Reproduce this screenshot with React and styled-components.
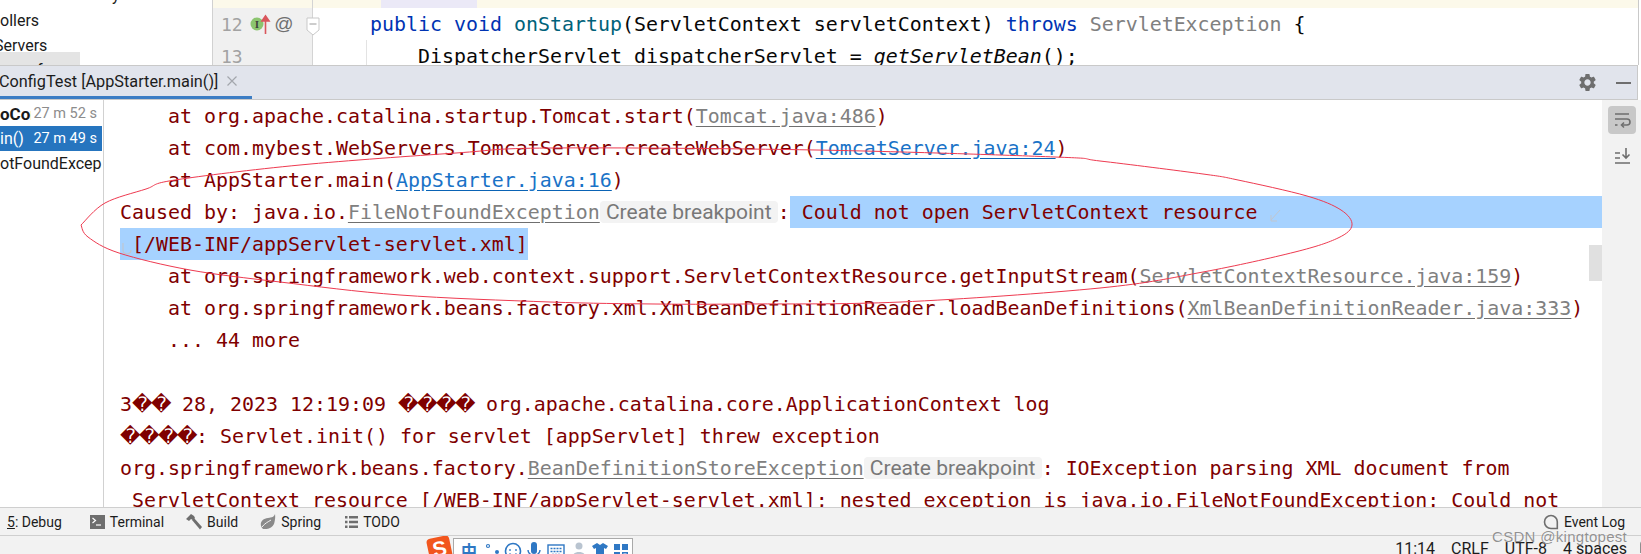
import React from 'react';
import styled, { createGlobalStyle } from 'styled-components';
import { MdSettings } from 'react-icons/md';

const GlobalStyle = createGlobalStyle`
  html, body {
    margin: 0;
    padding: 0;
    background: #fff;
  }
`;

const ui = `Roboto, 'Open Sans', sans-serif`;
const mono = `'DejaVu Sans Mono', 'Liberation Mono', monospace`;

const Page = styled.div`
  position: relative;
  width: 1641px;
  height: 554px;
  overflow: hidden;
  display: flex;
  flex-direction: column;
  font-family: ${ui};
  background: #fff;
`;

const TopRow = styled.div`
  display: flex;
  height: 65px;
  width: 1638px;
  flex: none;
  overflow: hidden;
  border-right: 1px solid #c9c9c9;
`;

const Tree = styled.div`
  width: 213px;
  flex: none;
  box-sizing: border-box;
  border-right: 1px solid #d1d1d1;
  overflow: hidden;
  font-size: 16px;
  color: #1a1a1a;
`;

const TreeRow = styled.div`
  height: 25px;
  line-height: 25px;
  white-space: nowrap;
  margin-top: ${p => p.$top || 0}px;
  margin-left: ${p => p.$left || 0}px;
`;

const TreeSelected = styled.div`
  width: 80px;
  height: 25px;
  margin-top: -6px;
  padding-left: 37px;
  box-sizing: border-box;
  line-height: 38px;
  background: #e4e4e4;
`;

const Editor = styled.div`
  flex: 1;
  display: flex;
  flex-direction: column;
  min-width: 0;
`;

const Band = styled.div`
  height: 8px;
  flex: none;
  display: flex;
  background: #fcf9ea;
`;

const BandGutter = styled.div`
  width: 100px;
  border-right: 1px solid #d4d4d4;
  box-sizing: border-box;
`;

const BandSelection = styled.div`
  width: 96px;
  margin-left: 68px;
  background: #ebe9f7;
`;

const EditorRow = styled.div`
  display: flex;
  height: 32px;
  flex: none;
`;

const Gutter = styled.div`
  width: 100px;
  flex: none;
  box-sizing: border-box;
  display: flex;
  align-items: center;
  padding-left: 8px;
  background: #f0f0f0;
  border-right: 1px solid #d4d4d4;
  font-family: ${mono};
  font-size: 18px;
  color: #a2a2a2;
`;

const GutterMarks = styled.svg`
  margin-left: 2px;
  flex: none;
  overflow: visible;
`;

const CodeLine = styled.div`
  flex: 1;
  padding-left: ${p => p.$indent * 12 + 9}px;
  font-family: ${mono};
  font-size: 19.93px;
  line-height: 33px;
  white-space: pre;
  color: #080808;
  background: ${p => (p.$guide ? 'linear-gradient(#e3e3e3, #e3e3e3) 53px 0 / 1px 100% no-repeat' : 'none')};
`;

const Keyword = styled.span`
  color: #0033b3;
`;

const Method = styled.span`
  color: #00627a;
`;

const Muted = styled.span`
  color: #808080;
`;

const Italic = styled.span`
  font-style: italic;
`;

const ToolHeader = styled.div`
  position: relative;
  width: 1638px;
  height: 35px;
  flex: none;
  box-sizing: border-box;
  display: flex;
  align-items: center;
  border-top: 1px solid #c9c9c9;
  border-bottom: 1px solid #c9c9c9;
  border-right: 1px solid #c9c9c9;
  background: #e1e4ec;
  overflow: hidden;
`;

const Tab = styled.div`
  width: 253px;
  height: 100%;
  flex: none;
  box-sizing: border-box;
  display: flex;
  align-items: center;
  gap: 9px;
  margin-left: -1px;
  border-bottom: 3px solid #3c7dc4;
  font-size: 16.25px;
  color: #1c1c1c;
  white-space: nowrap;
`;

const HeaderTools = styled.div`
  margin-left: auto;
  display: flex;
  align-items: center;
  gap: 18px;
  padding-right: 6px;
`;

const Minimize = styled.div`
  width: 15px;
  height: 2px;
  background: #6e6e6e;
`;

const Body = styled.div`
  height: 407px;
  flex: none;
  display: flex;
  overflow: hidden;
`;

const Frames = styled.div`
  width: 104px;
  flex: none;
  box-sizing: border-box;
  border-right: 1px solid #d1d1d1;
  padding-top: 1px;
  font-size: 16px;
  overflow: hidden;
`;

const FrameRow = styled.div`
  height: 25px;
  display: flex;
  align-items: center;
  justify-content: space-between;
  width: 102px;
  box-sizing: border-box;
  padding-right: 5px;
  white-space: nowrap;
  overflow: hidden;
  color: ${p => (p.$active ? '#fff' : '#1a1a1a')};
  background: ${p => (p.$active ? '#2675bf' : 'transparent')};
`;

const FrameName = styled.span`
  width: 31px;
  overflow: hidden;
  font-weight: ${p => (p.$bold ? 700 : 400)};
  font-size: ${p => (p.$bold ? 17 : 16)}px;
`;

const FrameTime = styled.span`
  color: ${p => (p.$active ? '#fff' : '#8c8c8c')};
  font-size: 14.5px;
`;

const Console = styled.div`
  position: relative;
  flex: 1;
  min-width: 0;
  overflow: hidden;
  font-family: ${mono};
  font-size: 19.93px;
  color: #7f0000;
`;

const Line = styled.div`
  display: flex;
  align-items: center;
  height: 32px;
  line-height: 33px;
  white-space: pre;
  padding-left: ${p => 16 + (p.$indent ? 48 : 0)}px;
`;

const LibLink = styled.span`
  color: #808080;
  text-decoration: underline;
  text-underline-offset: 3px;
  text-decoration-color: #6f6f6f;
`;

const UserLink = styled.span`
  color: #1a73c7;
  text-decoration: underline;
  text-underline-offset: 3px;
  text-decoration-color: #0a63b5;
`;

const Hint = styled.span`
  width: 178px;
  height: 22px;
  box-sizing: border-box;
  display: inline-flex;
  align-items: center;
  justify-content: center;
  border-radius: 4px;
  background: #f3f3f3;
  color: #787878;
  font-family: ${ui};
  font-size: 21px;
`;

const BadChar = styled.span`
  display: inline-block;
  width: 19px;
  text-align: center;
  font-family: 'DejaVu Sans', sans-serif;
  font-size: 20px;
  line-height: 32px;
`;

const BadRun = styled.span`
  display: inline-flex;
`;

const Selected = styled.span`
  position: relative;
  align-self: stretch;
  background: #a6d2ff;
  flex: ${p => (p.$fill ? 1 : 'none')};
`;

const MarkBox = styled.span`
  position: absolute;
  left: ${p => p.$left}px;
  top: ${p => p.$top}px;
  display: flex;
`;

const RightBar = styled.div`
  width: 39px;
  flex: none;
  display: flex;
  flex-direction: column;
  align-items: center;
  gap: 8px;
  padding-top: 6px;
  box-sizing: border-box;
  background: #f2f2f2;
`;

const BarButton = styled.div`
  width: 28px;
  height: 28px;
  display: flex;
  align-items: center;
  justify-content: center;
  border-radius: 4px;
  background: ${p => (p.$on ? '#c8c8c8' : 'transparent')};
`;

const ScrollThumb = styled.div`
  position: absolute;
  right: 0;
  top: 145px;
  width: 13px;
  height: 36px;
  background: #e0e0e0;
`;

const Stripes = styled.div`
  height: 29px;
  flex: none;
  box-sizing: border-box;
  display: flex;
  align-items: center;
  padding-right: 16px;
  background: #f2f2f2;
  border-top: 1px solid #cfcfcf;
  border-bottom: 1px solid #cfcfcf;
  font-size: 14px;
  color: #1c1c1c;
`;

const Stripe = styled.div`
  display: flex;
  align-items: center;
  gap: 5px;
  margin-left: ${p => (p.$auto ? 'auto' : `${p.$left}px`)};
  white-space: nowrap;
`;

const Mnemonic = styled.span`
  text-decoration: underline;
`;

const StatusBar = styled.div`
  height: 19px;
  flex: none;
  display: flex;
  align-items: flex-start;
  background: #f2f2f2;
  font-size: 16px;
  color: #1c1c1c;
  overflow: hidden;
`;

const Ime = styled.div`
  display: flex;
  align-items: flex-start;
  margin-left: 428px;
`;

const ImeLogo = styled.div`
  width: 23px;
  height: 23px;
  margin-top: 1px;
  border-radius: 4px;
  display: flex;
  align-items: center;
  justify-content: center;
  background: #f2561d;
  color: #fff;
  font-family: 'Liberation Sans', sans-serif;
  font-weight: 700;
  font-size: 21px;
  transform: rotate(-12deg);
`;

const ImeBar = styled.div`
  width: 180px;
  height: 24px;
  margin-top: 2px;
  margin-left: 2px;
  box-sizing: border-box;
  display: flex;
  align-items: flex-start;
  padding-top: 1px;
  border: 1px solid #a9a9a9;
  border-bottom: none;
  background: #fff;
`;

const ImeChar = styled.span`
  width: 30px;
  padding-left: 7px;
  box-sizing: border-box;
  font-family: 'Noto Sans CJK SC', sans-serif;
  font-size: 16px;
  font-weight: 700;
  line-height: 20px;
  color: #2f78c4;
`;

const StatusItems = styled.div`
  margin-left: auto;
  margin-right: -9px;
  display: flex;
  gap: 16px;
  padding-top: 3px;
  line-height: 20px;
  white-space: nowrap;
`;

const LockIcon = styled.svg`
  margin-left: -3px;
`;

const Watermark = styled.div`
  position: absolute;
  left: 1492px;
  top: 528px;
  font-family: 'Liberation Sans', sans-serif;
  font-size: 15px;
  letter-spacing: 0.3px;
  color: rgba(110, 110, 110, 0.75);
  text-shadow: 0 0 1px rgba(255, 255, 255, 0.9);
  white-space: nowrap;
`;

const Overlay = styled.svg`
  position: absolute;
  left: 0;
  top: 0;
  pointer-events: none;
`;

// the hand drawn ellipse, run through a catmull-rom curve
const inkPoints = [
  [81, 225], [88, 237], [119, 253], [190, 270], [280, 282], [400, 295], [550, 302], [655, 304],
  [743, 304], [901, 302], [1100, 288], [1203, 272], [1295, 252], [1338, 238], [1352, 225],
  [1341, 210], [1307, 196], [1238, 180], [1203, 174], [1100, 161], [1055, 157], [816, 150],
  [550, 148], [456, 153], [300, 165], [175, 180], [146, 189], [105, 203], [81, 225],
];

const inkPath = pts => {
  let d = `M${pts[0][0]} ${pts[0][1]}`;
  for (let i = 0; i < pts.length - 1; i++) {
    const p0 = pts[Math.max(i - 1, 0)];
    const p1 = pts[i];
    const p2 = pts[i + 1];
    const p3 = pts[Math.min(i + 2, pts.length - 1)];
    d += ` C${p1[0] + (p2[0] - p0[0]) / 6} ${p1[1] + (p2[1] - p0[1]) / 6} ${p2[0] - (p3[0] - p1[0]) / 6} ${p2[1] - (p3[1] - p1[1]) / 6} ${p2[0]} ${p2[1]}`;
  }
  return d;
};

const Bad = ({ count }) => (
  <BadRun>
    {Array.from({ length: count }, (_, i) => (
      <BadChar key={i}>�</BadChar>
    ))}
  </BadRun>
);

const Marks = () => (
  <GutterMarks width="68" height="24" viewBox="0 0 68 24">
    <circle cx="12" cy="12" r="6.5" fill="#8cc56f" />
    <text x="12" y="15.5" textAnchor="middle" fontFamily="Liberation Serif" fontWeight="700" fontSize="10" fill="#3c3c3c">I</text>
    <path d="M20.5 22V5M17 9l3.5-5L24 9z" stroke="#d9565c" strokeWidth="1.6" fill="#d9565c" />
    <text x="39" y="18" textAnchor="middle" fontFamily="Liberation Sans" fontSize="19" fill="#6f6f6f">@</text>
    <path d="M62 6h12v12l-6 5-6-5z" fill="#fff" stroke="#c9c9c9" />
    <path d="M64.500 12h7" stroke="#9a9a9a" />
  </GutterMarks>
);

const WrapIcon = () => (
  <svg width="18" height="18" viewBox="0 0 18 18" fill="none" stroke="#6e6e6e" strokeWidth="1.6">
    <path d="M2 3h14M2 8h12a2.500 2.500 0 0 1 0 6h-5" />
    <path d="M11 11.500L8.500 14l2.500 2.500" />
    <path d="M2 14h2.500" />
  </svg>
);

const ScrollEndIcon = () => (
  <svg width="18" height="18" viewBox="0 0 18 18" fill="none" stroke="#6e6e6e" strokeWidth="1.6">
    <path d="M2 16h15M2 6h5M2 11h5M13 1v10M9.500 7.500L13 11l3.500-3.500" />
  </svg>
);

const TerminalIcon = () => (
  <svg width="15" height="14" viewBox="0 0 15 14">
    <rect width="15" height="14" fill="#6e6e6e" />
    <path d="M2.500 3l3 2.500-3 2.500" fill="none" stroke="#fff" strokeWidth="1.2" />
    <path d="M6 10h5" stroke="#fff" strokeWidth="1.2" />
  </svg>
);

const HammerIcon = () => (
  <svg width="17" height="16" viewBox="0 0 17 16">
    <path d="M1 5l5-5 3 2 1 2-2 2-2-1-2 2z" fill="#6e6e6e" />
    <path d="M7 6l2-2 8 9-2 2.500z" fill="#6e6e6e" />
  </svg>
);

const SpringIcon = () => (
  <svg width="16" height="15" viewBox="0 0 16 15">
    <path d="M15 0C14 3 12 3.500 8 4 3 4.500 0 7.500 1 12c.3 1 1 2 2 3 4 .5 9-.5 11-5 1-3 1.500-7 1-10z" fill="#8a8a8a" />
    <path d="M2 13C5 9 8 8 11 6" stroke="#f2f2f2" fill="none" />
  </svg>
);

const TodoIcon = () => (
  <svg width="13" height="12" viewBox="0 0 13 12" fill="#6e6e6e">
    <path d="M0 0h2.500v2.500H0zM4 0h9v2.500H4zM0 4.700h2.500v2.500H0zM4 4.700h9v2.500H4zM0 9.400h2.500V12H0zM4 9.400h9V12H4z" />
  </svg>
);

const BubbleIcon = () => (
  <svg width="16" height="16" viewBox="0 0 16 16" fill="none" stroke="#6e6e6e" strokeWidth="1.6">
    <path d="M8 1.500a6.300 6.300 0 0 1 6.300 6.300V14.500H8A6.500 6.500 0 0 1 8 1.500z" />
  </svg>
);

const ImeIcons = () => (
  <svg width="148" height="20" viewBox="0 0 148 20">
    <circle cx="4" cy="6" r="1.500" fill="none" stroke="#2f78c4" strokeWidth="1.2" />
    <circle cx="13" cy="12" r="2" fill="#2f78c4" />
    <circle cx="29" cy="11" r="7.500" fill="none" stroke="#2f78c4" strokeWidth="1.6" />
    <path d="M26 9v2M32 9v2M25.500 13.500c2 2 5 2 7 0" stroke="#2f78c4" fill="none" strokeWidth="1.3" />
    <rect x="47" y="2" width="6" height="12" rx="3" fill="#2f78c4" />
    <path d="M44 10c0 7 12 7 12 0" stroke="#2f78c4" fill="none" strokeWidth="1.4" />
    <rect x="64" y="5" width="16" height="12" fill="none" stroke="#2f78c4" strokeWidth="1.4" />
    <path d="M66.500 8.500h11M66.500 11.500h11M68 14.500h8" stroke="#2f78c4" strokeWidth="1.4" strokeDasharray="2 1" />
    <circle cx="95" cy="6" r="3.500" fill="#b9c4d0" />
    <path d="M88 18c0-8 14-8 14 0z" fill="#b9c4d0" />
    <path d="M113 3l-5 3 2 3 2-1v10h8V8l2 1 2-3-5-3-3 2z" fill="#2f78c4" />
    <path d="M130 4h6v6h-6zM138 4h6v6h-6zM130 12h6v6h-6z" fill="#2f78c4" />
    <path d="M138.700 12.700h4.600v4.600h-4.600z" fill="none" stroke="#2f78c4" strokeWidth="1.400" />
  </svg>
);

const Arrow = () => (
  <svg width="14" height="14" viewBox="0 0 14 14" fill="none" stroke="#c0c6cf" strokeWidth="1">
    <path d="M12 1L3 11M3 6v6h6" />
  </svg>
);

const Hook = () => (
  <svg width="12" height="14" viewBox="0 0 12 14" fill="none" stroke="#c0c6cf" strokeWidth="1.2">
    <path d="M2 1v7c0 5 8 5 8 0" />
  </svg>
);

export default function App() {
  return (
    <Page>
      <GlobalStyle />
      <TopRow>
        <Tree>
          <TreeRow $top={-17} $left={112}>y</TreeRow>
          <TreeRow>ollers</TreeRow>
          <TreeRow $left={-6}>Servers</TreeRow>
          <TreeSelected>f</TreeSelected>
        </Tree>
        <Editor>
          <Band>
            <BandGutter />
            <BandSelection />
          </Band>
          <EditorRow>
            <Gutter>
              12
              <Marks />
            </Gutter>
            <CodeLine $indent={4}>
              <Keyword>public void </Keyword>
              <Method>onStartup</Method>
              (ServletContext servletContext) <Keyword>throws </Keyword>
              <Muted>ServletException</Muted> {'{'}
            </CodeLine>
          </EditorRow>
          <EditorRow>
            <Gutter>13</Gutter>
            <CodeLine $indent={8} $guide>
              DispatcherServlet dispatcherServlet = <Italic>getServletBean</Italic>();
            </CodeLine>
          </EditorRow>
        </Editor>
      </TopRow>

      <ToolHeader>
        <Tab>
          ConfigTest [AppStarter.main()]
          <svg width="10" height="10" viewBox="0 0 10 10" stroke="#a3a6ad" strokeWidth="1.2">
            <path d="M0.500 0.500l9 9M9.500 0.500l-9 9" />
          </svg>
        </Tab>
        <HeaderTools>
          <MdSettings size={21} color="#6e6e6e" />
          <Minimize />
        </HeaderTools>
      </ToolHeader>

      <Body>
        <Frames>
          <FrameRow>
            <FrameName $bold>oCor</FrameName>
            <FrameTime>27 m 52 s</FrameTime>
          </FrameRow>
          <FrameRow $active>
            <FrameName>in()</FrameName>
            <FrameTime $active>27 m 49 s</FrameTime>
          </FrameRow>
          <FrameRow>otFoundExcep</FrameRow>
        </Frames>

        <Console>
          <Line $indent>at org.apache.catalina.startup.Tomcat.start(<LibLink>Tomcat.java:486</LibLink>)</Line>
          <Line $indent>at com.mybest.WebServers.TomcatServer.createWebServer(<UserLink>TomcatServer.java:24</UserLink>)</Line>
          <Line $indent>at AppStarter.main(<UserLink>AppStarter.java:16</UserLink>)</Line>
          <Line>
            Caused by: java.io.<LibLink>FileNotFoundException</LibLink>
            <Hint>Create breakpoint</Hint>:
            <Selected $fill>
              {' Could not open ServletContext resource'}
              <MarkBox $left={478} $top={13}><Arrow /></MarkBox>
            </Selected>
          </Line>
          <Line>
            <Selected>
              {' [/WEB-INF/appServlet-servlet.xml]'}
              <MarkBox $left={1} $top={14}><Hook /></MarkBox>
            </Selected>
          </Line>
          <Line $indent>at org.springframework.web.context.support.ServletContextResource.getInputStream(<LibLink>ServletContextResource.java:159</LibLink>)</Line>
          <Line $indent>at org.springframework.beans.factory.xml.XmlBeanDefinitionReader.loadBeanDefinitions(<LibLink>XmlBeanDefinitionReader.java:333</LibLink>)</Line>
          <Line $indent>... 44 more</Line>
          <Line />
          <Line>3<Bad count={2} /> 28, 2023 12:19:09 <Bad count={4} /> org.apache.catalina.core.ApplicationContext log</Line>
          <Line><Bad count={4} />: Servlet.init() for servlet [appServlet] threw exception</Line>
          <Line>
            org.springframework.beans.factory.<LibLink>BeanDefinitionStoreException</LibLink>
            <Hint>Create breakpoint</Hint>: IOException parsing XML document from
          </Line>
          <Line> ServletContext resource [/WEB-INF/appServlet-servlet.xml]; nested exception is java.io.FileNotFoundException: Could not</Line>
          <ScrollThumb />
        </Console>

        <RightBar>
          <BarButton $on><WrapIcon /></BarButton>
          <BarButton><ScrollEndIcon /></BarButton>
        </RightBar>
      </Body>

      <Stripes>
        <Stripe $left={7}><span><Mnemonic>5</Mnemonic>: Debug</span></Stripe>
        <Stripe $left={28}><TerminalIcon />Terminal</Stripe>
        <Stripe $left={21}><HammerIcon />Build</Stripe>
        <Stripe $left={22}><SpringIcon />Spring</Stripe>
        <Stripe $left={24}><TodoIcon />TODO</Stripe>
        <Stripe $auto><BubbleIcon />Event Log</Stripe>
      </Stripes>

      <StatusBar>
        <Ime>
          <ImeLogo>S</ImeLogo>
          <ImeBar>
            <ImeChar>中</ImeChar>
            <ImeIcons />
          </ImeBar>
        </Ime>
        <StatusItems>
          <span>11:14</span>
          <span>CRLF</span>
          <span>UTF-8</span>
          <span>4 spaces</span>
          <LockIcon width="10" height="20" viewBox="0 0 10 20" fill="none" stroke="#6e6e6e" strokeWidth="1.5">
            <path d="M1 14V5a4 4 0 0 1 8 0v9" />
          </LockIcon>
        </StatusItems>
      </StatusBar>

      <Watermark>CSDN @kingtopest</Watermark>
      <Overlay width="1641" height="554" viewBox="0 0 1641 554">
        <path d={inkPath(inkPoints)} fill="none" stroke="#ee3a50" strokeWidth="1" />
      </Overlay>
    </Page>
  );
}
